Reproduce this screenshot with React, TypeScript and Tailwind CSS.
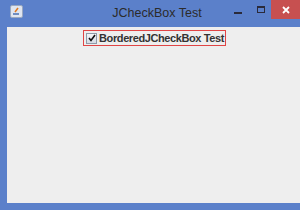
export default function App() {
  return (
    <div className="w-[300px] h-[210px] bg-[#5b80ca] flex flex-col overflow-hidden font-['Liberation_Sans',sans-serif]">
      <div className="h-[27px] flex items-start relative shrink-0">
        <div className="ml-[10px] mt-[5px] w-[13px] h-[13px] rounded-[2px] bg-[#dfe5f0] border border-[#9aa8c0] flex items-center justify-center">
          <svg width="9" height="9" viewBox="0 0 9 9">
            <path d="M1 7h6" stroke="#4a6fb0" strokeWidth="1.5" />
            <path d="M3 5l3-4" stroke="#e07a20" strokeWidth="1.5" />
          </svg>
        </div>
        <div className="absolute left-0 right-0 top-[6px] pl-[14px] text-center text-[12.5px] leading-[15px] text-[#2b2b2b]">
          JCheckBox Test
        </div>
        <div className="ml-auto flex items-start z-10">
          <div className="w-[8px] h-[2px] bg-[#2a2a3a] mt-[12px] mr-[15px]" />
          <div className="w-[8px] h-[7px] border border-[#2a2a3a] border-t-2 mt-[6px] mr-[6px]" />
          <div className="w-[29px] h-[19px] bg-[#c75050] flex items-center justify-center">
            <svg width="8" height="8" viewBox="0 0 8 8">
              <path d="M1 1l6 6M7 1L1 7" stroke="#ffffff" strokeWidth="1.8" />
            </svg>
          </div>
        </div>
      </div>
      <div className="flex-1 ml-[7px] mb-[7px] bg-[#eeeeee] flex justify-center">
        <div className="mt-[3px] ml-[2px] h-[16px] flex items-center gap-[2px] border border-[#e04545] pl-[2px] pr-[1px]">
          <div className="w-[11px] h-[11px] border border-[#8f9aa8] bg-gradient-to-b from-[#f4f6f8] to-[#d4dbe4] flex items-center justify-center">
            <svg width="8" height="8" viewBox="0 0 8 8">
              <path d="M1 4l2 2.5L7 1" fill="none" stroke="#111" strokeWidth="1.6" />
            </svg>
          </div>
          <span className="text-[11px] font-bold text-[#333] leading-none tracking-[-0.4px]">
            BorderedJCheckBox Test
          </span>
        </div>
      </div>
    </div>
  );
}
